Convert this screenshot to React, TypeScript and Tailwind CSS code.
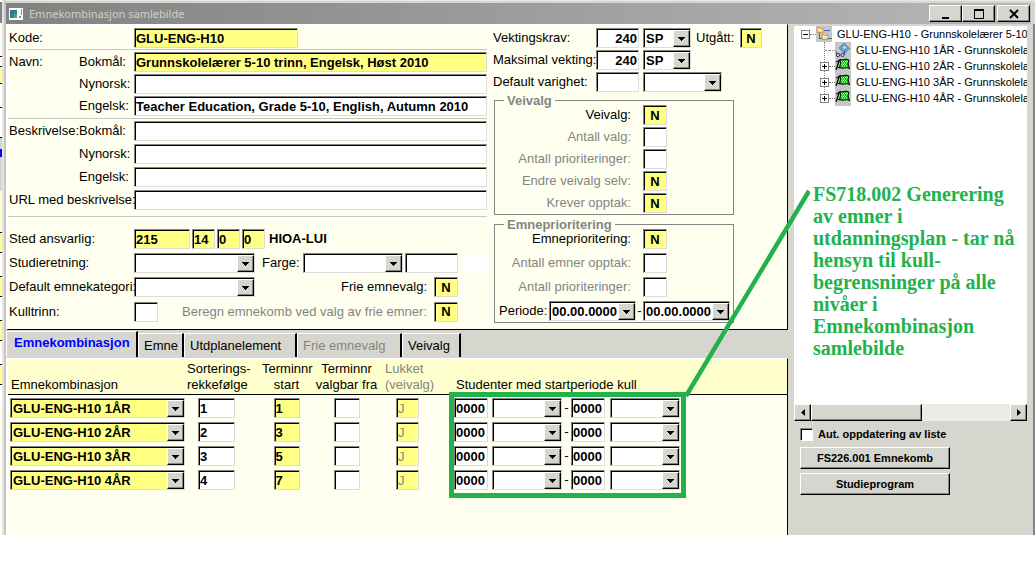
import { useState, type ReactNode } from "react";
import clsx from "clsx";

const FIELD =
  "h-5 min-w-0 rounded-none border border-t-[#848484] border-l-[#848484] border-r-[#dcdcdc] border-b-[#dcdcdc] shadow-[inset_1px_1px_0_#000] text-[13px] leading-[18px] font-bold outline-none";

const RAISED =
  "border border-t-white border-l-white border-r-black border-b-black bg-[#d6d6ce] shadow-[inset_-1px_-1px_0_#848484]";

type FieldProps = {
  id?: string;
  label?: string;
  value?: string;
  className?: string;
  yellow?: boolean;
};

function TextField({ id, label, value = "", className, yellow }: FieldProps) {
  return (
    <input
      id={id}
      aria-label={label}
      type="text"
      defaultValue={value}
      className={clsx(FIELD, "px-px", yellow ? "bg-[#ffff84]" : "bg-white", className)}
    />
  );
}

function Flag({ id, value = "" }: { id: string; value?: string }) {
  return <TextField id={id} value={value} yellow={value !== ""} className="w-6 shrink-0 text-center" />;
}

function DropDown({ id, label, value = "", className, yellow }: FieldProps) {
  return (
    <span className={clsx("relative inline-block h-5 shrink-0 align-top", className)}>
      <select
        id={id}
        aria-label={label}
        defaultValue={value}
        className={clsx(FIELD, "block w-full appearance-none pt-px pl-[2px]", yellow ? "bg-[#ffff84]" : "bg-white")}
      >
        <option value={value}>{value}</option>
      </select>
      <span className={clsx(RAISED, "pointer-events-none absolute top-[2px] right-px flex h-[17px] w-[17px] items-center justify-center")}>
        <svg width="7" height="4" viewBox="0 0 7 4" shapeRendering="crispEdges">
          <path d="M0 0h7v1H0zM1 1h5v1H1zM2 2h3v1H2zM3 3h1v1H3z" />
        </svg>
      </span>
    </span>
  );
}

function NameRow({ id, group, label, value, yellow }: { id: string; group?: string; label: string; value?: string; yellow?: boolean }) {
  return (
    <div className="flex h-5">
      <span className="w-[71px] shrink-0 pl-px whitespace-nowrap">{group}</span>
      <label htmlFor={id} className="w-[55px] shrink-0 whitespace-nowrap">{label}</label>
      <TextField id={id} value={value} yellow={yellow} className="flex-1" />
    </div>
  );
}

function FormLabel({ htmlFor, children }: { htmlFor: string; children: ReactNode }) {
  return (
    <label htmlFor={htmlFor} className="relative z-10 w-[126px] shrink-0 pl-px whitespace-nowrap">
      {children}
    </label>
  );
}

function Divider() {
  return <hr className="border-0 border-t border-[#c6c6c6]" />;
}

function FlagRow({ id, label, value, dim }: { id: string; label: string; value?: string; dim?: boolean }) {
  return (
    <div className="flex gap-3">
      <label htmlFor={id} className={clsx("w-[136px] shrink-0 text-right whitespace-nowrap", dim && "text-[#848484]")}>
        {label}
      </label>
      <Flag id={id} value={value} />
    </div>
  );
}

function LeftForm() {
  return (
    <div className="flex w-[479px] flex-col">
      <div className="flex">
        <FormLabel htmlFor="kode">Kode:</FormLabel>
        <TextField id="kode" value="GLU-ENG-H10" yellow className="w-[164px]" />
      </div>
      <div className="mt-px mb-[2px]"><Divider /></div>
      <div className="flex flex-col gap-[2px]">
        <NameRow id="navn-bm" group="Navn:" label="Bokmål:" value="Grunnskolelærer 5-10 trinn, Engelsk, Høst 2010" yellow />
        <NameRow id="navn-nn" label="Nynorsk:" />
        <NameRow id="navn-en" label="Engelsk:" value="Teacher Education, Grade 5-10, English, Autumn 2010" />
      </div>
      <div className="my-[2px]"><Divider /></div>
      <div className="flex flex-col gap-[3px]">
        <NameRow id="besk-bm" group="Beskrivelse:" label="Bokmål:" />
        <NameRow id="besk-nn" label="Nynorsk:" />
        <NameRow id="besk-en" label="Engelsk:" />
        <div className="flex">
          <FormLabel htmlFor="url">URL med beskrivelse:</FormLabel>
          <TextField id="url" className="flex-1" />
        </div>
      </div>
      <div className="mt-[6px] mb-3"><Divider /></div>
      <div className="flex flex-col gap-1">
        <div className="flex">
          <FormLabel htmlFor="sted">Sted ansvarlig:</FormLabel>
          <div className="flex gap-[2px]">
            <TextField id="sted" value="215" yellow className="w-14" />
            <TextField label="Fakultet" value="14" yellow className="w-[23px]" />
            <TextField label="Institutt" value="0" yellow className="w-[23px]" />
            <TextField label="Gruppe" value="0" yellow className="w-[23px]" />
          </div>
          <span className="ml-1 font-bold">HIOA-LUI</span>
        </div>
        <div className="flex">
          <FormLabel htmlFor="studieretning">Studieretning:</FormLabel>
          <DropDown id="studieretning" className="w-[121px]" />
          <label htmlFor="farge" className="w-[48px] pl-[7px]">Farge:</label>
          <DropDown id="farge" className="w-[100px]" />
          <TextField label="Fargekode" className="ml-[2px] w-[53px]" />
          <span className="ml-[6px] flex-1 rounded-sm bg-white" />
        </div>
        <div className="flex">
          <FormLabel htmlFor="kategori">Default emnekategori:</FormLabel>
          <DropDown id="kategori" className="w-[121px]" />
          <label htmlFor="frie" className="flex-1 pr-[7px] text-right">Frie emnevalg:</label>
          <div className="w-[53px]"><Flag id="frie" value="N" /></div>
        </div>
        <div className="flex">
          <FormLabel htmlFor="kulltrinn">Kulltrinn:</FormLabel>
          <TextField id="kulltrinn" className="w-6" />
          <label htmlFor="beregn" className="flex-1 pr-[7px] text-right whitespace-nowrap text-[#848484]">
            Beregn emnekomb ved valg av frie emner:
          </label>
          <div className="w-[53px]"><Flag id="beregn" value="N" /></div>
        </div>
      </div>
    </div>
  );
}

function RightForm() {
  return (
    <div className="w-[295px]">
      <div className="flex flex-col gap-[2px]">
        <div className="flex gap-1">
          <label htmlFor="krav" className="w-[100px] pl-px">Vektingskrav:</label>
          <TextField id="krav" value="240" className="w-[43px] text-right" />
          <DropDown label="Enhet vektingskrav" value="SP" className="w-12" />
          <label htmlFor="utgatt" className="w-[41px] pl-px">Utgått:</label>
          <TextField id="utgatt" value="N" yellow className="w-[22px] text-center" />
        </div>
        <div className="flex gap-1">
          <label htmlFor="maks" className="w-[100px] pl-px whitespace-nowrap">Maksimal vekting:</label>
          <TextField id="maks" value="240" className="w-[43px] text-right" />
          <DropDown label="Enhet maksimal vekting" value="SP" className="w-12" />
        </div>
        <div className="flex gap-1">
          <label htmlFor="varighet" className="w-[100px] pl-px">Default varighet:</label>
          <TextField id="varighet" className="w-[43px]" />
          <DropDown label="Enhet varighet" className="w-[79px]" />
        </div>
      </div>
      <fieldset className="mt-[3px] ml-[2px] w-[240px] border border-[#848484] pb-px">
        <legend className="ml-[9px] h-[10px] px-[3px] leading-[12px] font-bold text-[#848484]">Veivalg</legend>
        <div className="flex flex-col gap-[2px]">
          <FlagRow id="veivalg" label="Veivalg:" value="N" />
          <FlagRow id="antall-valg" label="Antall valg:" dim />
          <FlagRow id="antall-pri" label="Antall prioriteringer:" dim />
          <FlagRow id="endre" label="Endre veivalg selv:" value="N" dim />
          <FlagRow id="krever" label="Krever opptak:" value="N" dim />
        </div>
      </fieldset>
      <fieldset className="mt-1 ml-[2px] w-[240px] border border-[#848484] pb-px">
        <legend className="ml-[9px] h-[10px] px-[3px] leading-[12px] font-bold text-[#848484]">Emneprioritering</legend>
        <div className="flex flex-col gap-1">
          <FlagRow id="emnepri" label="Emneprioritering:" value="N" />
          <FlagRow id="emner-opptak" label="Antall emner opptak:" dim />
          <FlagRow id="emner-pri" label="Antall prioriteringer:" dim />
          <div className="flex">
            <label htmlFor="periode" className="w-[54px] pl-1">Periode:</label>
            <DropDown id="periode" value="00.00.0000" className="w-[87px]" />
            <span className="w-[7px] text-center">-</span>
            <DropDown label="Periode til" value="00.00.0000" className="w-[87px]" />
          </div>
        </div>
      </fieldset>
    </div>
  );
}

const TABS = [
  { name: "Emnekombinasjon", width: "w-[132px]" },
  { name: "Emne", width: "w-[46px]" },
  { name: "Utdplanelement", width: "w-[113px]" },
  { name: "Frie emnevalg", width: "w-[105px]", disabled: true },
  { name: "Veivalg", width: "w-[59px]" },
];

function TabStrip() {
  const [active, setActive] = useState("Emnekombinasjon");
  return (
    <div role="tablist" className="flex h-7 items-end bg-[#d6d6ce] pb-px">
      {TABS.map((t) => (
        <button
          key={t.name}
          role="tab"
          aria-selected={active === t.name}
          disabled={t.disabled}
          onClick={() => setActive(t.name)}
          className={clsx(
            t.width,
            "border-t border-r-2 border-l border-t-white border-l-white border-r-black text-left whitespace-nowrap",
            active === t.name ? "h-[26px] pb-[3px] pl-[7px] font-bold text-[#0000ff]" : "h-[24px] pl-[5px]",
            t.disabled && "text-[#848484]",
          )}
        >
          {t.name}
        </button>
      ))}
    </div>
  );
}

const ROWS = [
  { name: "GLU-ENG-H10 1ÅR", sort: "1", start: "1" },
  { name: "GLU-ENG-H10 2ÅR", sort: "2", start: "3" },
  { name: "GLU-ENG-H10 3ÅR", sort: "3", start: "5" },
  { name: "GLU-ENG-H10 4ÅR", sort: "4", start: "7" },
];

function CombinationTable() {
  return (
    <table className="w-full table-fixed border-collapse">
      <colgroup>
        <col className="w-[179px]" />
        <col className="w-[75px]" />
        <col className="w-[49px]" />
        <col className="w-[71px]" />
        <col className="w-[67px]" />
        <col className="w-[338px]" />
      </colgroup>
      <thead className="border-b border-black bg-[#ffffce] text-left align-bottom leading-4">
        <tr className="h-[35px] whitespace-nowrap">
          <th className="p-0 pb-px pl-[3px] font-normal">Emnekombinasjon</th>
          <th className="p-0 pb-px font-normal">Sorterings-<br />rekkefølge</th>
          <th className="p-0 pb-px text-center font-normal">Terminnr<br />start</th>
          <th className="p-0 pb-px text-center font-normal">Terminnr<br />valgbar fra</th>
          <th className="p-0 pb-px pl-[3px] font-normal text-[#848484]">Lukket<br />(veivalg)</th>
          <th className="p-0 pb-px pl-[7px] font-normal">Studenter med startperiode kull</th>
        </tr>
      </thead>
      <tbody>
        {ROWS.map((r) => (
          <tr key={r.name} className="h-6 align-bottom leading-5">
            <td className="p-0 pt-[3px] pl-[2px]">
              <DropDown label="Emnekombinasjon" value={r.name} yellow className="w-[175px]" />
            </td>
            <td className="p-0 pl-[11px]">
              <TextField label={`Sorteringsrekkefølge ${r.name}`} value={r.sort} className="block w-[37px]" />
            </td>
            <td className="p-0">
              <TextField label={`Terminnr start ${r.name}`} value={r.start} yellow className="mx-auto block w-[26px]" />
            </td>
            <td className="p-0">
              <TextField label={`Terminnr valgbar fra ${r.name}`} className="mx-auto block w-[26px]" />
            </td>
            <td className="p-0 pl-[14px]">
              <TextField label={`Lukket ${r.name}`} value="J" yellow className="block w-[23px] font-normal! text-[#848484]" />
            </td>
            <td className="p-0 pl-[5px]">
              <div className="flex">
                <TextField label="År fra" value="0000" className="w-[34px]" />
                <DropDown label="Termin fra" className="ml-1 w-[70px]" />
                <span className="w-[9px] text-center">-</span>
                <TextField label="År til" value="0000" className="w-[34px]" />
                <DropDown label="Termin til" className="ml-[5px] w-[70px]" />
              </div>
            </td>
          </tr>
        ))}
      </tbody>
    </table>
  );
}

function Toggle({ open, label }: { open?: boolean; label: string }) {
  return (
    <button aria-label={label} className="relative z-10 h-[9px] w-[9px] shrink-0 bg-white">
      <svg width="9" height="9" viewBox="0 0 9 9" shapeRendering="crispEdges" className="block">
        <path d="M.5.5h8v8h-8z" fill="none" stroke="#848484" />
        <path d="M2 4h5v1H2z" />
        {!open && <path d="M4 2h1v5H4z" />}
      </svg>
    </button>
  );
}

function FolderIcon() {
  return (
    <svg width="16" height="16" viewBox="0 0 16 16" className="shrink-0 bg-[#c6c6c6]">
      <path d="M3.500 7v5.500H6M8 4.500h6M12 12.500h4" fill="none" stroke="#2a6fb0" />
      <path d="M1 1.500h2l1 1h3v4H1zM6 8.500h2l1 1h3v4H6z" fill="#ffd88a" stroke="#c58a35" strokeWidth=".8" />
      <path d="M2 3.500h4M7 10.500h4" stroke="#fff4cf" />
    </svg>
  );
}

function BookIcon() {
  return (
    <svg width="16" height="16" viewBox="0 0 16 16" className="shrink-0 bg-[#c6c6c6]">
      <path d="M4 6l5-5 6 6-5 5z" fill="#6f9fd0" stroke="#41719f" strokeWidth=".7" />
      <path d="M10 12l5-5v1.500l-5 5z" fill="#fff" stroke="#7d92a8" strokeWidth=".5" />
      <path d="M8 5l2-1 1 2-2 1z" fill="#d8ecff" />
      <circle cx="3" cy="13" r="1.700" fill="#c9c9e8" stroke="#34346e" />
      <circle cx="7.500" cy="13" r="1.700" fill="#c9c9e8" stroke="#34346e" />
      <path d="M1.500 12V9.500M9 12l1-3" stroke="#34346e" strokeWidth=".8" />
    </svg>
  );
}

function FlagIcon() {
  return (
    <svg width="16" height="16" viewBox="0 0 16 16" className="shrink-0 bg-[#c6c6c6]">
      <path d="M4.500 1.500L1 12" stroke="#000" strokeWidth="1.300" />
      <path d="M1 4l3-1.500M2 9l3 1" stroke="#000" />
      <path d="M5 1.500q2 1 4 0t5 .5l-1 4 1.500 4.500q-3-1.500-5-.5t-5-.5l1-4z" fill="#12c812" stroke="#000" />
      <path d="M6 3.500h1M8 3.500h1M10 3.500h1M12 3.500h1M7 5h1M9 5h1M11 5h1M6 6.500h1M8 6.500h1M10 6.500h1M7 8h1M9 8h1M11 8h1" stroke="#d0ffd0" />
    </svg>
  );
}

const TREE = [
  { name: "GLU-ENG-H10 1ÅR - Grunnskolelærer 5-10 trinn", leaf: true },
  { name: "GLU-ENG-H10 2ÅR - Grunnskolelærer 5-10 trinn" },
  { name: "GLU-ENG-H10 3ÅR - Grunnskolelærer 5-10 trinn" },
  { name: "GLU-ENG-H10 4ÅR - Grunnskolelærer 5-10 trinn" },
];

function Tree() {
  return (
    <div className="relative h-[378px] overflow-hidden bg-white text-[11px] leading-4">
      <div className="flex items-center pl-[7px] whitespace-nowrap">
        <Toggle open label="Lukk GLU-ENG-H10" />
        <span className="w-[6px] shrink-0 border-t border-dotted border-[#848484]" />
        <FolderIcon />
        <span className="pl-[5px]">GLU-ENG-H10 - Grunnskolelærer 5-10 trinn</span>
      </div>
      <ul className="relative">
        <li aria-hidden className="absolute top-0 left-[30px] h-14 border-l border-dotted border-[#848484]" />
        {TREE.map((n) => (
          <li key={n.name} className="flex items-center pl-[26px] whitespace-nowrap">
            {n.leaf ? <span className="w-[9px] shrink-0 pl-[5px]"><span className="block border-t border-dotted border-[#848484]" /></span> : <Toggle label={`Åpne ${n.name}`} />}
            <span className="w-[6px] shrink-0 border-t border-dotted border-[#848484]" />
            {n.leaf ? <BookIcon /> : <FlagIcon />}
            <span className="pl-[5px]">{n.name}</span>
          </li>
        ))}
      </ul>
    </div>
  );
}

function SidePanel() {
  return (
    <aside className="min-w-0 flex-1 border-r-2 border-[#848484] bg-[#d6d6ce] pt-[2px] pr-[6px] pl-[6px]">
      <Tree />
      <div className="flex h-[17px] bg-[#ebebe7]">
        <button aria-label="Rull til venstre" className={clsx(RAISED, "flex w-[17px] items-center justify-center")}>
          <svg width="4" height="7" viewBox="0 0 4 7"><path d="M4 0v7L0 3.500z" /></svg>
        </button>
        <div className={clsx(RAISED, "w-[111px]")} />
        <button aria-label="Rull til høyre" className={clsx(RAISED, "ml-auto flex w-[17px] items-center justify-center")}>
          <svg width="4" height="7" viewBox="0 0 4 7"><path d="M0 0v7l4-3.500z" /></svg>
        </button>
      </div>
      <div className="flex flex-col items-start gap-1 pt-1 pl-[6px] text-[11px] font-bold">
        <label className="flex h-[18px] items-center gap-[5px]">
          <input type="checkbox" className="h-[13px] w-[13px] appearance-none border border-t-[#848484] border-l-[#848484] border-r-white border-b-white bg-white shadow-[inset_1px_1px_0_#000]" />
          Aut. oppdatering av liste
        </label>
        <button className={clsx(RAISED, "h-[22px] w-[150px]")}>FS226.001 Emnekomb</button>
        <button className={clsx(RAISED, "h-[22px] w-[150px]")}>Studieprogram</button>
      </div>
    </aside>
  );
}

function TitleBar() {
  return (
    <header className="flex h-[21px] items-center bg-linear-to-r from-[#828282] to-[#b8b8b8] pr-px pl-[3px]">
      <svg width="14" height="12" viewBox="0 0 14 12" shapeRendering="crispEdges">
        <path d="M0 0h14v12H0z" fill="#fff" />
        <path d="M1 2h7v8H1z" fill="#2f7f8c" />
        <path d="M1 2h3v4H1z" fill="#3f66a8" />
        <path d="M5 6h3v4H5z" fill="#4fa768" />
        <path d="M10 8h2v2h-2zM12 1h1v6h-1z" fill="#8a8a8a" />
      </svg>
      <h1 className="pl-[6px] font-['Noto_Sans'] text-[11px] text-[#d0d0c8]">Emnekombinasjon samlebilde</h1>
      <div className="ml-auto flex">
        <button aria-label="Minimer" className={clsx(RAISED, "flex h-[17px] w-[33px] items-center justify-center")}>
          <svg width="12" height="12" viewBox="0 0 12 12"><path d="M2 9h7v2H2z" /></svg>
        </button>
        <button aria-label="Maksimer" className={clsx(RAISED, "flex h-[17px] w-[33px] items-center justify-center")}>
          <svg width="12" height="12" viewBox="0 0 12 12" shapeRendering="crispEdges"><path d="M1 1h10v10H1zM2 3v7h8V3z" fillRule="evenodd" /></svg>
        </button>
        <button aria-label="Lukk" className={clsx(RAISED, "ml-[2px] flex h-[17px] w-[33px] items-center justify-center")}>
          <svg width="12" height="12" viewBox="0 0 12 12"><path d="M2 2l8 8M10 2l-8 8" stroke="#000" strokeWidth="2" /></svg>
        </button>
      </div>
    </header>
  );
}

// edge of the window lying behind, seen at the far left
const BEHIND = [
  "h-[2px] bg-white",
  "h-[21px] bg-[#848484]",
  "h-[33px] bg-[#ffffef]",
  "h-[10px] bg-white border-t border-black",
  "h-[17px] bg-[#ffff84] border-t border-black",
  "h-[24px] bg-white border-t border-black",
  "h-[30px] bg-white border-t border-black",
  "h-[12px] bg-[#d6d6ce] border-t border-black",
  "h-[8px] bg-[#0000ff]",
  "h-[34px] bg-[#d6d6ce]",
  "h-[41px] bg-[#ffffce]",
];

function BehindEdge() {
  return (
    <div aria-hidden className="flex w-1 shrink-0 flex-col overflow-hidden border-r-2 border-[#e4e4e4] bg-[#ffffef]">
      {BEHIND.map((c, i) => <div key={i} className={clsx(c, "shrink-0")} />)}
      {[0, 1, 2, 3].map((i) => (
        <div key={i} className="shrink-0">
          <div className="h-[20px] border-t border-black bg-[#ffff84]" />
          <div className="h-[24px] border-t border-black bg-white" />
        </div>
      ))}
    </div>
  );
}

export default function App() {
  return (
    <div className="min-h-screen overflow-hidden bg-white font-['Liberation_Sans',sans-serif] text-[13px] leading-5 text-black">
      <div className="relative flex">
        <BehindEdge />
        <div className="min-w-0 flex-1 border-t border-l-2 border-t-[#e8e8e4] border-l-[#c6c6c0] bg-[#d6d6ce] pt-[2px]">
          <div className="pr-1"><TitleBar /></div>
          <div className="flex">
            <main className="w-min shrink-0">
              <section className="flex gap-[5px] border-t border-r border-b border-l-2 border-t-white border-r-black border-b-black border-l-white bg-[#ffffef] pt-[3px] pb-[6px]">
                <LeftForm />
                <RightForm />
              </section>
              <TabStrip />
              <section className="border-t border-r border-l-2 border-t-white border-r-black border-l-white bg-[#ffffef] pb-[45px]">
                <CombinationTable />
              </section>
            </main>
            <SidePanel />
          </div>
        </div>

        {/* Annotation */}
        <div className="pointer-events-none absolute top-[392px] left-[449px] h-[106px] w-[237px] border-[5px] border-[#22b14c]" />
        <svg width="126" height="210" viewBox="0 0 126 210" className="pointer-events-none absolute top-[189px] left-[684px]">
          <path d="M2 207L125 2" stroke="#22b14c" strokeWidth="4.500" />
        </svg>
        <p className="absolute top-[183px] left-[813px] w-[205px] font-['Liberation_Serif',serif] text-[20px] leading-[22px] font-bold text-[#22b14c]">
          FS718.002 Generering<br />av emner i<br />utdanningsplan - tar nå<br />hensyn til kull-<br />begrensninger på alle<br />nivåer i<br />Emnekombinasjon<br />samlebilde
        </p>
      </div>
    </div>
  );
}
